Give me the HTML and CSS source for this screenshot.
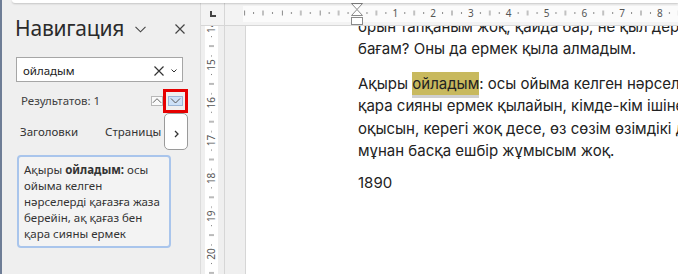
FILE: index.html
```html
<!DOCTYPE html>
<html lang="kk">
<head>
<meta charset="utf-8">
<title>Навигация</title>
<link rel="stylesheet" href="styles.css">
</head>
<body>
<div class="app">
  <div class="ribbon-edge"><div class="ribbon"></div></div>
  <div class="main">
    <aside class="nav">
      <div class="nav-head">
        <h1 class="nav-title">Навигация</h1>
        <svg class="ico-chev" width="11" height="7" viewBox="0 0 11 7"><path d="M0.5 0.8 L5.5 5.8 L10.5 0.8" fill="none" stroke="#444" stroke-width="1.1"/></svg>
        <svg class="ico-close" width="10" height="10" viewBox="0 0 10 10"><path d="M0.5 0.5 L9.5 9.5 M9.5 0.5 L0.5 9.5" fill="none" stroke="#444" stroke-width="1.2"/></svg>
      </div>
      <div class="search">
        <span class="search-text">ойладым</span>
        <svg class="ico-x" width="10" height="10" viewBox="0 0 10 10"><path d="M0.5 0.5 L9.5 9.5 M9.5 0.5 L0.5 9.5" fill="none" stroke="#333" stroke-width="1.2"/></svg>
        <svg class="ico-dd" width="6" height="4" viewBox="0 0 6 4"><path d="M0.5 0.5 L3 3 L5.5 0.5" fill="none" stroke="#333" stroke-width="1"/></svg>
      </div>
      <div class="results">
        <span class="results-text">Результатов: 1</span>
        <div class="steppers">
          <span class="step"><svg width="11" height="7" viewBox="0 0 11 7"><path d="M1 6 L5.5 1.5 L10 6" fill="none" stroke="#555" stroke-width="1"/></svg></span>
          <span class="mark">
            <span class="step step-active"><svg width="11" height="7" viewBox="0 0 11 7"><path d="M1 1.5 L5.5 6 L10 1.5" fill="none" stroke="#555" stroke-width="1"/></svg></span>
          </span>
        </div>
      </div>
      <div class="tabs">
        <span class="tab tab-first">Заголовки</span>
        <span class="tab tab-second">Страницы</span>
        <span class="tab-more"><svg width="5" height="8" viewBox="0 0 5 8"><path d="M1 1 L4 4 L1 7" fill="none" stroke="#333" stroke-width="1.3"/></svg></span>
      </div>
      <div class="hit">Ақыры <b>ойладым:</b> осы<br>ойыма келген<br>нәрселерді қағазға жаза<br>берейін, ақ қағаз бен<br>қара сияны ермек</div>
    </aside>
    <section class="docwrap">
      <div class="ruler-row">
        <div class="corner"><span class="tabsel"></span></div>
        <svg class="hruler" width="453" height="22" viewBox="0 0 453 22">
          <defs>
            <pattern id="hp" patternUnits="userSpaceOnUse" x="132.5" y="0" width="37.8" height="22">
              <rect x="9" y="9" width="1" height="2" fill="#888"/>
              <rect x="18.4" y="7.5" width="1" height="5" fill="#888"/>
              <rect x="27.9" y="9" width="1" height="2" fill="#888"/>
            </pattern>
            <pattern id="hw" patternUnits="userSpaceOnUse" x="132.5" y="0" width="37.8" height="22">
              <rect x="0" y="7.5" width="1" height="5" fill="#888"/>
            </pattern>
          </defs>
          <rect x="18" y="3" width="435" height="16" fill="#fbfbfb"/>
          <rect x="18" y="0" width="435" height="22" fill="url(#hp)"/>
          <rect x="18" y="0" width="110" height="22" fill="url(#hw)"/>
          <g font-size="10" fill="#555" text-anchor="middle">
            <text x="170.3" y="13.5">1</text>
            <text x="208.1" y="13.5">2</text>
            <text x="245.9" y="13.5">3</text>
            <text x="283.7" y="13.5">4</text>
            <text x="321.5" y="13.5">5</text>
            <text x="359.3" y="13.5">6</text>
            <text x="397.1" y="13.5">7</text>
            <text x="434.9" y="13.5">8</text>
          </g>
          <g fill="#fff" stroke="#8a8a8a" stroke-width="1">
            <path d="M126.5 0.5 L137.5 0.5 L132 6.5 Z"/>
            <path d="M132 6.5 L126.5 12.5 L137.5 12.5 Z"/>
            <rect x="126.5" y="14.5" width="11" height="7"/>
          </g>
        </svg>
      </div>
      <div class="doc-body">
        <div class="vruler">
          <svg width="23" height="249" viewBox="0 0 23 249">
            <defs>
              <pattern id="vp" patternUnits="userSpaceOnUse" x="0" y="1.2" width="23" height="37.8">
                <rect x="10" y="9" width="1" height="1" fill="#777"/>
                <rect x="8" y="18.4" width="5" height="1" fill="#777"/>
                <rect x="10" y="28.3" width="1" height="1" fill="#777"/>
              </pattern>
            </defs>
            <rect x="4" y="0" width="13" height="249" fill="#fff"/>
            <rect x="0" y="0" width="23" height="249" fill="url(#vp)"/>
            <g font-size="10" fill="#555" text-anchor="middle">
              <text transform="translate(14,1.2) rotate(-90)">14</text>
              <text transform="translate(14,39) rotate(-90)">15</text>
              <text transform="translate(14,76.8) rotate(-90)">16</text>
              <text transform="translate(14,114.6) rotate(-90)">17</text>
              <text transform="translate(14,152.4) rotate(-90)">18</text>
              <text transform="translate(14,190.2) rotate(-90)">19</text>
              <text transform="translate(14,228) rotate(-90)">20</text>
            </g>
          </svg>
        </div>
        <div class="gutter"></div>
        <div class="page">
          <div class="text">
            <p class="para">
              <span class="line">орын тапқаным жоқ, қайда бар, не қыл дерім бар?</span>
              <span class="line">бағам? Оны да ермек қыла алмадым.</span>
            </p>
            <p class="para para-tight">
              <span class="line">Ақыры <span class="hl">ойладым</span>: осы ойыма келген нәрселерді қағазға жаза берейін,</span>
              <span class="line">қара сияны ермек қылайын, кімде-кім ішінен керекті сөз тапса,</span>
              <span class="line">оқысын, керегі жоқ десе, өз сөзім өзімдікі дер. Енді</span>
              <span class="line">мұнан басқа ешбір жұмысым жоқ.</span>
            </p>
            <p class="para">
              <span class="line">1890</span>
            </p>
          </div>
        </div>
      </div>
    </section>
  </div>
</div>
</body>
</html>
```

FILE: styles.css
```css
* { box-sizing: border-box; }
html, body { margin: 0; padding: 0; }
body {
  width: 678px;
  height: 274px;
  overflow: hidden;
  background: #efefef;
  font-family: "Noto Sans", "Open Sans", sans-serif;
  color: #333;
}
.app {
  width: 678px;
  height: 274px;
  display: flex;
  flex-direction: column;
  border-left: 2px solid #6e7d96;
  overflow: hidden;
}
.ribbon-edge {
  height: 3px;
  flex: none;
  background: #efefef;
  position: relative;
  z-index: 2;
}
.ribbon {
  margin-left: 10px;
  height: 3px;
  background: #fff;
  border-bottom-left-radius: 5px;
  box-shadow: 0 1px 2px rgba(0,0,0,0.18);
}
.main {
  flex: 1;
  display: flex;
  min-height: 0;
}
.nav {
  width: 199px;
  flex: none;
  border-right: 1px solid #dcdcdc;
  background: #efefef;
  padding: 15px 0 0 13px;
  display: flex;
  flex-direction: column;
}
.nav-head {
  display: flex;
  align-items: center;
  height: 21px;
}
.nav-title {
  margin: 0;
  width: 118px;
  flex: none;
  font-weight: 400;
  font-size: 21px;
  line-height: 21px;
  color: #2b2b2b;
  letter-spacing: -0.2px;
  white-space: nowrap;
}
.ico-chev { margin-left: 2px; margin-top: 2px; }
.ico-close { margin-left: 29px; margin-top: 0; }
.search {
  margin-top: 18px;
  margin-left: 1px;
  width: 167px;
  height: 25px;
  background: #fff;
  border: 1px solid #a6a6a6;
  display: flex;
  align-items: center;
  padding-left: 6px;
}
.search-text {
  font-size: 11.5px;
  color: #222;
  flex: 1;
  padding-top: 1px;
}
.ico-x { margin-right: 7px; margin-top: 2px; }
.ico-dd { margin-right: 5px; margin-top: 3px; }
.results {
  margin-top: 6px;
  display: flex;
  align-items: center;
  height: 25px;
  width: 173px;
}
.results-text {
  font-size: 11.5px;
  color: #404040;
  margin-left: 6px;
  flex: 1;
}
.steppers {
  display: flex;
  align-items: center;
}
.step {
  width: 12px;
  height: 10px;
  border: 1px solid #b8b8b8;
  background: #fafafa;
  display: flex;
  align-items: center;
  justify-content: center;
}
.step svg { display: block; }
.mark {
  border: 3px solid #e60000;
  padding: 4px 2px;
  display: flex;
}
.step-active {
  width: 15px;
  background: #cde1f7;
  border-color: #9bb6d6;
}
.tabs {
  margin-top: 0;
  display: flex;
  align-items: center;
  height: 37px;
  font-size: 11.5px;
  color: #333;
}
.tab-first { margin-left: 5px; margin-right: 27px; }
.tab-second { margin-right: 6px; width: 53px; white-space: nowrap; }
.tab-more {
  width: 24px;
  height: 37px;
  background: #fff;
  border: 1px solid #9a9a9a;
  border-radius: 5px;
  display: flex;
  align-items: center;
  justify-content: center;
  padding-top: 4px;
}
.hit {
  margin-top: 5px;
  margin-left: 2px;
  width: 154px;
  height: 93px;
  border: 2px solid #a9c5ec;
  border-radius: 4px;
  background: #f3f3f3;
  padding: 5px 4px 0 5px;
  font-size: 11.5px;
  line-height: 16px;
  color: #333;
  white-space: nowrap;
  overflow: hidden;
}
.hit b { font-weight: 700; }
.docwrap {
  flex: 1;
  display: flex;
  flex-direction: column;
  min-width: 0;
}
.ruler-row {
  height: 23px;
  flex: none;
  display: flex;
  border-bottom: 1px solid #d6d6d6;
  background: #f3f3f3;
}
.corner {
  width: 24px;
  border-right: 1px solid #d6d6d6;
  display: flex;
  align-items: flex-start;
  justify-content: center;
  padding-top: 8px;
}
.tabsel {
  width: 6px;
  height: 6px;
  border-left: 2px solid #444;
  border-bottom: 2px solid #444;
}
.hruler { display: block; flex: none; font-family: "Noto Sans", sans-serif; }
.doc-body {
  flex: 1;
  display: flex;
  min-height: 0;
}
.vruler {
  width: 24px;
  flex: none;
  border-right: 1px solid #d6d6d6;
  overflow: hidden;
}
.vruler svg { display: block; font-family: "Noto Sans", sans-serif; }
.gutter {
  width: 21px;
  flex: none;
  border-right: 1px solid #d6d6d6;
}
.page {
  flex: 1;
  background: #fff;
  overflow: hidden;
  min-width: 0;
}
.text {
  margin-top: -10px;
  padding-left: 112px;
  font-family: Inter, "Noto Sans", sans-serif;
  font-size: 15px;
  line-height: 22.3px;
  color: #222;
}
.para { margin: 0 0 12.5px 0; }
.para-tight { margin-bottom: 10px; }
.line { display: block; white-space: nowrap; }
.hl {
  background: #c8b95e;
  box-shadow: 0 3px 0 #cfcfcf;
  padding: 2px 0;
}
```
